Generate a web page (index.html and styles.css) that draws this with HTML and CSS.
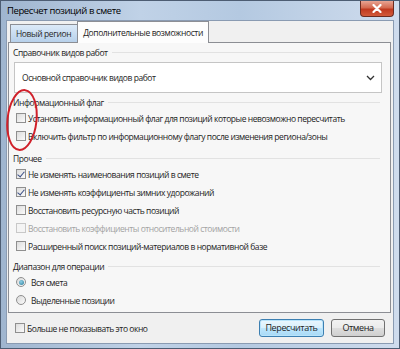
FILE: index.html
```html
<!DOCTYPE html>
<html lang="ru">
<head>
    <meta charset="UTF-8">
    <meta name="viewport" content="width=device-width, initial-scale=1.0">
    <link rel="stylesheet" href="styles.css">
</head>
<body>
    <div class="window">
        <div class="titlebar">
            <span class="title">Пересчет позиций в смете</span>
            <div class="close-btn">
                <svg width="10" height="9" viewBox="0 0 10 9">
                    <path d="M1.5 1 L8.5 8 M8.5 1 L1.5 8" stroke="#fff" stroke-width="2.2" stroke-linecap="round"/>
                </svg>
            </div>
        </div>

        <div class="client">
            <div class="tabs">
                <div class="tab tab-hover">Новый регион</div>
                <div class="tab tab-active">Дополнительные возможности</div>
            </div>

            <div class="panel">
                <div class="group-head head-first">Справочник видов работ</div>
                <div class="combo">
                    <span>Основной справочник видов работ</span>
                    <svg class="chevron" width="9" height="6" viewBox="0 0 9 6">
                        <path d="M1 1 L4.5 4.5 L8 1" fill="none" stroke="#333" stroke-width="1.3"/>
                    </svg>
                </div>

                <div class="group-head head-flag">Информационный флаг</div>
                <div class="option"><span class="cb"></span>Установить информационный флаг для позиций которые невозможно пересчитать</div>
                <div class="option"><span class="cb"></span>Включить фильтр по информационному флагу после изменения региона/зоны</div>

                <div class="group-head head-other">Прочее</div>
                <div class="option"><span class="cb checked"></span>Не изменять наименования позиций в смете</div>
                <div class="option"><span class="cb checked"></span>Не изменять коэффициенты зимних удорожаний</div>
                <div class="option"><span class="cb"></span>Восстановить ресурсную часть позиций</div>
                <div class="option disabled"><span class="cb"></span>Восстановить коэффициенты относительной стоимости</div>
                <div class="option"><span class="cb"></span>Расширенный поиск позиций-материалов в нормативной базе</div>

                <div class="group-head head-range">Диапазон для операции</div>
                <div class="option"><span class="radio checked"></span>Вся смета</div>
                <div class="option"><span class="radio"></span>Выделенные позиции</div>
            </div>

            <div class="footer">
                <div class="option"><span class="cb"></span>Больше не показывать это окно</div>
                <div class="buttons">
                    <button class="btn btn-default">Пересчитать</button>
                    <button class="btn">Отмена</button>
                </div>
            </div>
        </div>

        <!-- red marker drawn over the screenshot -->
        <svg class="marker" width="40" height="70" viewBox="0 0 40 70">
            <ellipse cx="20" cy="34" rx="14.5" ry="30" fill="none" stroke="#d0202a" stroke-width="2" transform="rotate(6 20 34)"/>
        </svg>
    </div>
</body>
</html>
```

FILE: styles.css
```css
body {
    margin: 0;
    font-family: "Open Sans", "Noto Sans", sans-serif;
    font-size: 8.5px;
    letter-spacing: -0.45px;
    color: #1e1e1e;
}
.window {
    position: relative;
    width: 400px;
    height: 349px;
    box-sizing: border-box;
    border: 1px solid #4d5d73;
    background: linear-gradient(90deg, #9fb5cf 0%, #c0d2e7 35%, #b4c9e1 60%, #cfdced 100%);
    display: flex;
    flex-direction: column;
}
.titlebar {
    height: 19px;
    display: flex;
    align-items: center;
    justify-content: space-between;
    padding-left: 6px;
}
.title {
    color: #000;
    font-size: 9.5px;
    letter-spacing: -0.4px;
}
.close-btn {
    width: 34px;
    height: 16px;
    margin-right: 5px;
    margin-top: -3px;
    border: 1px solid #6b2b20;
    border-top: none;
    border-radius: 0 0 4px 4px;
    background: linear-gradient(#e8a493 0%, #d46a50 45%, #c0391f 55%, #d25a3a 100%);
    display: flex;
    align-items: center;
    justify-content: center;
    box-sizing: border-box;
}
.client {
    flex: 1;
    margin: 0 5px 4px 5px;
    border: 1px solid #8a9bb2;
    background: #f0f0f0;
    display: flex;
    flex-direction: column;
    padding: 0 2px 0 1px;
}
.tabs {
    display: flex;
    align-items: flex-end;
    padding-left: 2px;
    height: 21px;
    position: relative;
    z-index: 1;
}
.tab {
    border: 1px solid #8c8e94;
    border-bottom: none;
    padding: 0 6px;
    display: flex;
    align-items: center;
    font-size: 8.5px;
    letter-spacing: -0.4px;
}
.tab-hover {
    height: 17px;
    background: linear-gradient(#dceaf8, #b7d0ea);
    margin-right: -1px;
    color: #2b2b2b;
    padding: 0 6px 0 5px;
}
.tab-active {
    height: 21px;
    background: #fdfdfd;
    margin-bottom: -1px;
    padding: 0 5px;
}
.panel {
    height: 269px;
    border: 1px solid #8c8e94;
    background: #f7f7f7;
    padding: 0 4px;
}
.group-head {
    height: 14px;
    display: flex;
    align-items: center;
    gap: 4px;
    color: #1e1e1e;
}
.group-head::after {
    content: "";
    flex: 1;
    height: 1px;
    margin-right: 6px;
    background: #e2e2e2;
}
.head-first { margin-top: 2px; }
.head-flag { margin-top: 2px; }
.head-other { margin-top: 6px; }
.head-range { margin-top: 4px; }
.combo {
    height: 29px;
    margin: 3px 4px 0 1px;
    border: 1px solid #c5c5c5;
    background: #fff;
    display: flex;
    align-items: center;
    justify-content: space-between;
    padding: 0 6px 0 7px;
}
.option {
    height: 18px;
    display: flex;
    align-items: center;
    padding-left: 3px;
    white-space: nowrap;
}
.option.disabled { color: #a3a3a3; }
.cb {
    width: 10px;
    height: 10px;
    box-sizing: border-box;
    border: 1px solid #8f8f8f;
    background: linear-gradient(135deg, #dcdcdc, #fbfbfb);
    margin-right: 2px;
    position: relative;
    flex: none;
}
.disabled .cb {
    border-color: #c8c8c8;
    background: #f4f4f4;
}
.cb.checked::after {
    content: "";
    position: absolute;
    left: 2px;
    top: 0px;
    width: 3px;
    height: 6px;
    border: solid #3b4f86;
    border-width: 0 1.5px 1.5px 0;
    transform: rotate(40deg);
}
.radio {
    width: 10px;
    height: 10px;
    box-sizing: border-box;
    border: 1px solid #8f8f8f;
    border-radius: 50%;
    background: linear-gradient(135deg, #d9d9d9, #fbfbfb);
    margin-right: 5px;
    position: relative;
    flex: none;
}
.radio.checked::after {
    content: "";
    position: absolute;
    left: 1.5px;
    top: 1.5px;
    width: 5px;
    height: 5px;
    border-radius: 50%;
    background: radial-gradient(circle at 40% 35%, #8fd0e6, #2a7a98);
}
.footer {
    flex: 1;
    display: flex;
    align-items: center;
    justify-content: space-between;
    padding: 0 6px 0 4px;
}
.buttons {
    display: flex;
    gap: 7px;
    margin-top: -1px;
}
.btn {
    height: 18px;
    font-family: inherit;
    font-size: 9px;
    letter-spacing: -0.4px;
    color: #1e1e1e;
    border: 1px solid #707070;
    border-radius: 3px;
    background: linear-gradient(#f2f2f2 0%, #ebebeb 48%, #dddddd 52%, #cfcfcf 100%);
    padding: 0;
}
.btn-default {
    width: 65px;
    border-color: #3c7fb1;
    background: linear-gradient(#eaf6fd 0%, #d9f0fc 48%, #bee6fd 52%, #a7d9f5 100%);
    box-shadow: inset 0 0 0 1px #b9e4fb;
}
.btn:not(.btn-default) { width: 54px; }
.marker {
    position: absolute;
    left: 1px;
    top: 85px;
}
```
